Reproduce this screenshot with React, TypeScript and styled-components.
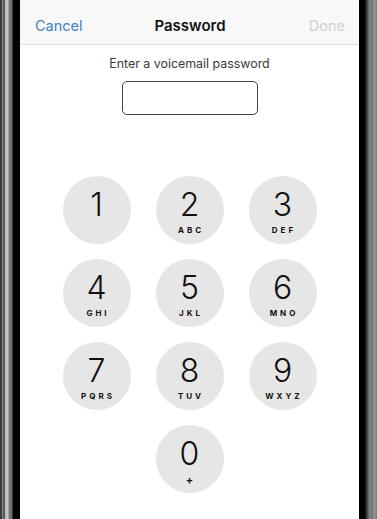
import React from 'react';
import styled, { createGlobalStyle } from 'styled-components';

const GlobalStyle = createGlobalStyle`
  html, body {
    margin: 0;
    padding: 0;
    height: 100%;
    overflow: hidden;
    background: #000;
  }
  #root {
    height: 100%;
  }
`;

const Frame = styled.div`
  display: flex;
  height: 519px;
  width: 377px;
`;

const LeftBezel = styled.div`
  width: 20px;
  flex-shrink: 0;
  background: linear-gradient(
    to right,
    #3c3c3c 0px, #3c3c3c 2px,
    #8a8a8a 2px, #8a8a8a 3px,
    #5a5a5a 3px, #5a5a5a 5px,
    #b8b8b8 5px, #c8c8c8 8px,
    #7a7a7a 9px, #6a6a6a 12px,
    #000 13px, #000 20px
  );
`;

const RightBezel = styled.div`
  width: 18px;
  flex-shrink: 0;
  background: linear-gradient(
    to right,
    #000 0px, #000 6px,
    #2a2a2a 7px, #555 9px,
    #8a8a8a 11px, #6a6a6a 13px,
    #9a9a9a 15px, #7a7a7a 18px
  );
`;

const Screen = styled.div`
  flex: 1;
  display: flex;
  flex-direction: column;
  background: #fff;
  font-family: Inter, "Noto Sans", sans-serif;
`;

const NavBar = styled.div`
  height: 45px;
  box-sizing: border-box;
  padding: 6px 14px 0 15px;
  display: flex;
  align-items: center;
  justify-content: space-between;
  background: #f8f8f8;
  border-bottom: 1px solid #dedede;
`;

const NavButton = styled.span<{ $disabled?: boolean }>`
  font-size: 14.5px;
  color: ${p => (p.$disabled ? '#cfcfcf' : '#4482c2')};
  width: 60px;
  text-align: ${p => (p.$disabled ? 'right' : 'left')};
`;

const Title = styled.span`
  font-size: 15px;
  font-weight: 600;
  color: #111;
`;

const Body = styled.div`
  display: flex;
  flex-direction: column;
  align-items: center;
  padding-top: 11px;
`;

const Prompt = styled.div`
  font-size: 12.4px;
  color: #3a3a3a;
  line-height: 16px;
`;

const PasswordBox = styled.div`
  margin-top: 9px;
  width: 136px;
  height: 34px;
  box-sizing: border-box;
  border: 1px solid #444;
  border-radius: 5px;
`;

const Keypad = styled.div`
  margin-top: 61px;
  display: grid;
  grid-template-columns: repeat(3, 68px);
  column-gap: 25px;
  row-gap: 15px;
`;

const Key = styled.button<{ $col?: number }>`
  grid-column: ${p => p.$col ?? 'auto'};
  box-sizing: border-box;
  width: 68px;
  height: 68px;
  border: 0;
  padding: 13px 0 0;
  border-radius: 50%;
  background: #e6e6e6;
  display: flex;
  flex-direction: column;
  align-items: center;
  justify-content: flex-start;
  font-family: Inter, "Noto Sans", sans-serif;
  color: #111;
`;

const Digit = styled.span`
  font-size: 32px;
  font-weight: 300;
  line-height: 32px;
`;

const Letters = styled.span`
  font-size: 8px;
  font-weight: 700;
  letter-spacing: 3px;
  margin-right: -3px;
  line-height: 10px;
  margin-top: 3.5px;
`;

const Plus = styled.span`
  font-size: 11px;
  font-weight: 700;
  line-height: 10px;
  margin-top: 4.5px;
`;

const keys = [
  { d: '1', l: '' },
  { d: '2', l: 'ABC' },
  { d: '3', l: 'DEF' },
  { d: '4', l: 'GHI' },
  { d: '5', l: 'JKL' },
  { d: '6', l: 'MNO' },
  { d: '7', l: 'PQRS' },
  { d: '8', l: 'TUV' },
  { d: '9', l: 'WXYZ' },
];

const App = () => (
  <>
    <GlobalStyle />
    <Frame>
      <LeftBezel />
      <Screen>
        <NavBar>
          <NavButton>Cancel</NavButton>
          <Title>Password</Title>
          <NavButton $disabled>Done</NavButton>
        </NavBar>
        <Body>
          <Prompt>Enter a voicemail password</Prompt>
          <PasswordBox />
          <Keypad>
            {keys.map(k => (
              <Key key={k.d} type="button">
                <Digit>{k.d}</Digit>
                {k.l && <Letters>{k.l}</Letters>}
              </Key>
            ))}
            <Key type="button" $col={2}>
              <Digit>0</Digit>
              <Plus>+</Plus>
            </Key>
          </Keypad>
        </Body>
      </Screen>
      <RightBezel />
    </Frame>
  </>
);

export default App;
